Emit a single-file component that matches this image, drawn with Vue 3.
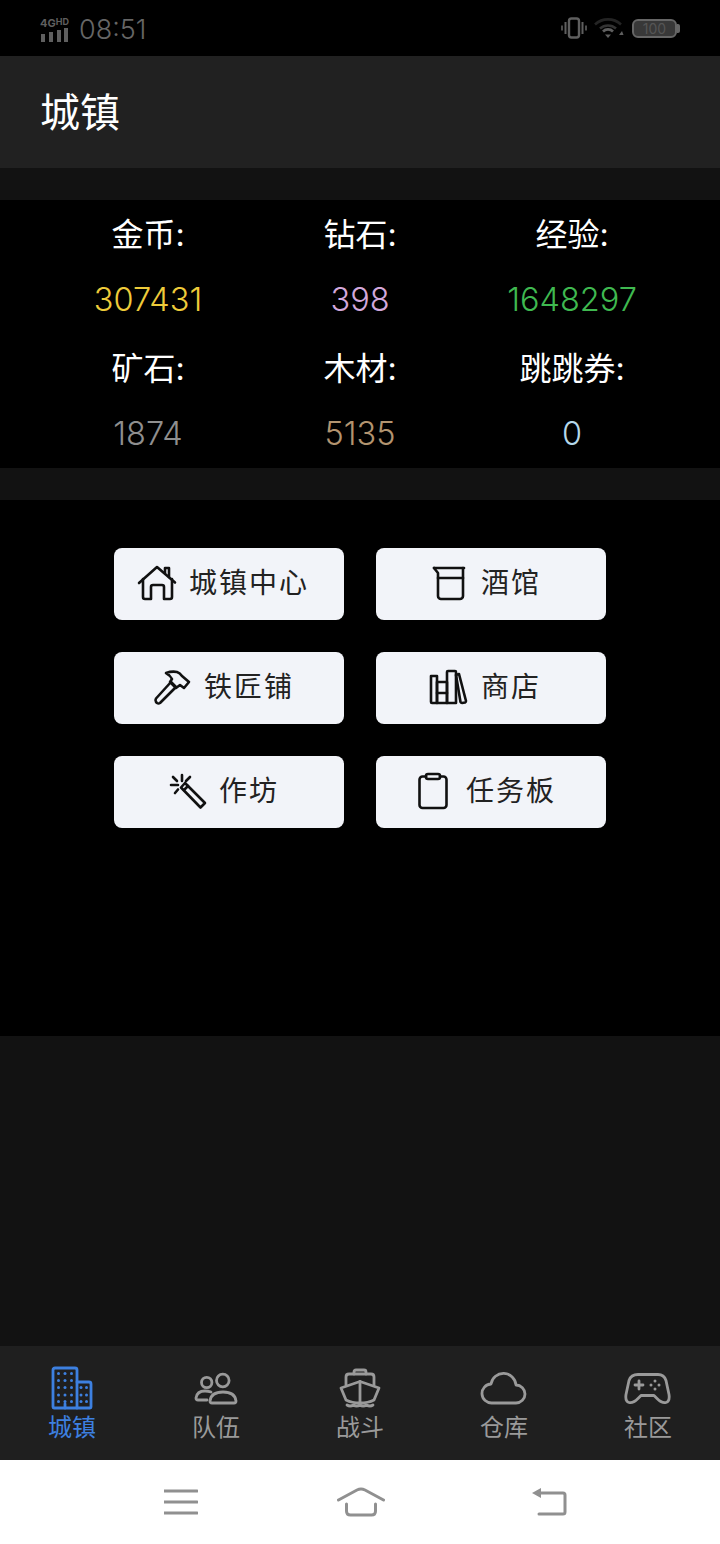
<template>
  <div class="page">
    <!-- status bar -->
    <div class="status">
      <div class="status-left">
        <div class="signal">
          <span class="net">4G<small>HD</small></span>
          <svg width="30" height="14" viewBox="0 0 30 14" fill="none" stroke="#5f5f5f" stroke-width="4">
            <path d="M3 6v8M11 4v10M19 2v12M26 0v14" />
          </svg>
        </div>
        <span class="clock">08:51</span>
      </div>
      <div class="status-right">
        <svg width="26" height="22" viewBox="0 0 26 22" fill="none" stroke="#5f5f5f">
          <rect x="8" y="1.500" width="10" height="19" rx="2.500" stroke-width="2.400" />
          <path d="M4.500 5v12M21.500 5v12" stroke-width="2" />
          <path d="M1 8.500v5M25 8.500v5" stroke-width="1.600" />
        </svg>
        <svg width="32" height="22" viewBox="0 0 32 22" fill="none" stroke-width="2.600">
          <path d="M2 7.500a19 19 0 0 1 26 0" stroke="#242424" />
          <path d="M7 11.500a12 12 0 0 1 16 0" stroke="#333" />
          <path d="M10 14.500a7 7 0 0 1 10 0" stroke="#5f5f5f" />
          <path d="M12 17.500h6l-3 3.500z" fill="#5f5f5f" />
          <path d="M26 18l3-4 1.500 4z" fill="#5f5f5f" />
        </svg>
        <div class="battery">
          <div class="battery-body"><span>100</span></div>
          <div class="battery-cap"></div>
        </div>
      </div>
    </div>

    <header class="topbar"><span>城镇</span></header>
    <div class="spacer"></div>

    <section class="stats">
      <div v-for="s in stats" :key="s.label" class="stat">
        <div class="stat-label">{{ s.label }}</div>
        <div class="stat-value" :style="{ color: s.color }">{{ s.value }}</div>
      </div>
    </section>
    <div class="spacer"></div>

    <section class="actions">
      <button v-for="a in actions" :key="a.label" class="action">
        <svg width="40" height="40" viewBox="0 0 40 40" fill="none" stroke="#111" stroke-width="2.600" stroke-linejoin="round" stroke-linecap="round">
          <path v-for="(d, i) in a.paths" :key="i" :d="d" />
        </svg>
        <span>{{ a.label }}</span>
      </button>
    </section>

    <div class="fill"></div>

    <nav class="tabbar">
      <div v-for="t in tabs" :key="t.label" class="tab" :class="{ active: t.active }">
        <svg width="48" height="44" viewBox="0 0 48 44" fill="none" stroke="currentColor" stroke-width="2.800" stroke-linejoin="round" stroke-linecap="round">
          <path v-for="(d, i) in t.paths" :key="i" :d="d" />
          <circle v-for="(c, i) in t.dots" :key="'d' + i" :cx="c[0]" :cy="c[1]" r="1.500" fill="currentColor" stroke="none" />
        </svg>
        <span>{{ t.label }}</span>
      </div>
    </nav>

    <!-- android nav keys -->
    <div class="syskeys">
      <svg width="34" height="28" viewBox="0 0 34 28" fill="none" stroke="#909090" stroke-width="3">
        <path d="M0 3h33M0 14h33M0 25h33" stroke-linecap="round" />
      </svg>
      <svg width="48" height="30" viewBox="0 0 48 30" fill="none" stroke="#909090" stroke-width="3" stroke-linecap="round">
        <path d="M1.500 13 20 3q4-2 8 0l18.500 10" />
        <path d="M9.500 17v7q0 4 4 4h21q4 0 4-4v-7" />
      </svg>
      <svg class="back" width="35" height="28" viewBox="0 0 35 28" fill="none" stroke="#909090" stroke-width="3" stroke-linecap="round">
        <path d="M8 5h23q2 0 2 2v17q0 2-2 2H7" />
        <path d="M9 0v10L0 5z" fill="#909090" stroke="none" />
      </svg>
    </div>
  </div>
</template>

<script setup>
const stats = [
  { label: '金币:', value: '307431', color: '#eecb3a' },
  { label: '钻石:', value: '398', color: '#d3a8dc' },
  { label: '经验:', value: '1648297', color: '#3fb950' },
  { label: '矿石:', value: '1874', color: '#8f8f8f' },
  { label: '木材:', value: '5135', color: '#b3946f' },
  { label: '跳跳券:', value: '0', color: '#b5d8ea' },
]

const actions = [
  {
    label: '城镇中心',
    paths: [
      'M2 19 20 3l18 15.500',
      'M6 15v18a2 2 0 0 0 2 2h6V23a2 2 0 0 1 2-2h9a2 2 0 0 1 2 2v12h6a2 2 0 0 0 2-2V15',
      'M28 9V4h4v9',
    ],
  },
  {
    label: '酒馆',
    paths: ['M5 4h30', 'M34 4v28a3 3 0 0 1-3 3H12a3 3 0 0 1-3-3V9L5 4', 'M9 14h25'],
  },
  {
    label: '铁匠铺',
    paths: [
      'M4 30.500 19 14l5 5L8 35q-1.500 1-3 0l-1-1q-1-2 0-3.500z',
      'M14 5q6-2 11-1 3 1 5 4l7 6-5 6-4-3-4 3-6-6 2-3q-2-4-6-6z',
    ],
  },
  {
    label: '商店',
    paths: [
      'M2 8h6v27H3a1 1 0 0 1-1-1z',
      'M8 14h10v21H8z',
      'M8 25h10',
      'M18 4a1 1 0 0 1 1-1h7a1 1 0 0 1 1 1v31h-9z',
      'M27 7l3-1 7 27q0 1-1 1.500l-3 .5q-1 0-1.500-1z',
    ],
  },
  {
    label: '作坊',
    paths: [
      'M18 11l20 20-4.500 4.500-19.500-20z',
      'M17 18l4-4',
      'M15 3v6M4 13h7M6 5l4 4M23 5l-4 4M8 21l3-3.500',
    ],
  },
  {
    label: '任务板',
    paths: [
      'M12 4.500H8.500a3 3 0 0 0-3 3V33a3 3 0 0 0 3 3h21a3 3 0 0 0 3-3V7.500a3 3 0 0 0-3-3H26',
      'M14 2h10a2 2 0 0 1 2 2v1a2 2 0 0 1-2 2H14a2 2 0 0 1-2-2V4a2 2 0 0 1 2-2z',
    ],
  },
]

// windows of the town icon
const buildingDots = []
for (const y of [7.500, 14.500, 21.500, 29, 35.500]) {
  for (const x of [10.500, 17, 23.500]) buildingDots.push([x, y])
}
for (const y of [21.500, 29, 35.500]) {
  for (const x of [33, 38.500]) buildingDots.push([x, y])
}

const tabs = [
  {
    label: '城镇',
    active: true,
    paths: [
      'M5 4a2 2 0 0 1 2-2h20a2 2 0 0 1 2 2v38H6a1 1 0 0 1-1-1V4z',
      'M29 16h12a2 2 0 0 1 2 2v23a1 1 0 0 1-1 1H29',
      'M17 42v-4',
    ],
    dots: buildingDots,
  },
  {
    label: '队伍',
    paths: [
      'M9.500 16.500a5.200 5.200 0 1 0 10.400 0a5.200 5.200 0 1 0-10.400 0z',
      'M24.500 14.500a6.300 6.300 0 1 0 12.600 0a6.300 6.300 0 1 0-12.600 0z',
      'M19 26q-3-1-6-1-8 0-9 7 0 2 2 2h9',
      'M18 35q1-9 13-9t13 9q0 2-2 2H20q-2 0-2-2z',
    ],
  },
  {
    label: '战斗',
    paths: [
      'M18 8V6q0-2 2-2h8q2 0 2 2v2',
      'M10 19v-8q0-3 3-3h22q3 0 3 3v8',
      'M24 15.500 5 22l5 12q6 3 14 3t14-3l5-12z',
      'M24 15.500V37',
      'M11 39q3 2 6.500 0 3 2 6.500 0 3 2 6.500 0 3.500 2 6.500 0',
    ],
  },
  {
    label: '仓库',
    paths: ['M12 37a9.500 9.500 0 0 1-1-19 12.600 12.600 0 0 1 25 1 9 9 0 0 1 0 18z'],
  },
  {
    label: '社区',
    paths: [
      'M14 8.500h20q6 0 8 6l3 14q1 7-3 8t-9-4l-3-3H17l-3 3q-5 5-9 4t-3-8l3-14q2-6 9-6z',
      'M11 19h8M15 15v8',
    ],
    dots: [[31, 15], [27, 19], [35, 19], [31, 23]],
  },
]
</script>

<style>
html,
body {
  margin: 0;
  background: #000;
}
</style>

<style scoped>
.page {
  width: 720px;
  height: 1544px;
  display: flex;
  flex-direction: column;
  background: #121212;
  font-family: 'Inter', 'Noto Sans CJK SC', sans-serif;
  color: #fff;
  overflow: hidden;
}

/* status bar */
.status {
  height: 56px;
  flex: none;
  background: #000;
  display: flex;
  justify-content: space-between;
  align-items: center;
  padding: 0 40px;
  box-sizing: border-box;
}
.status-left,
.status-right {
  display: flex;
  align-items: center;
}
.status-left {
  padding-top: 2px;
}
.status-right {
  gap: 6px;
}
.signal {
  display: flex;
  flex-direction: column;
  width: 31px;
  margin-right: 8px;
}
.net {
  font-size: 11px;
  line-height: 10px;
  font-weight: 700;
  color: #5f5f5f;
  white-space: nowrap;
}
.net small {
  font-size: 9px;
  vertical-align: 2px;
}
.clock {
  font-size: 27px;
  font-weight: 300;
  color: #666;
}
.battery {
  display: flex;
  align-items: center;
  margin-left: 1px;
}
.battery-body {
  width: 45px;
  height: 19px;
  box-sizing: border-box;
  border: 2px solid #666;
  border-radius: 6px;
  display: flex;
  align-items: center;
  justify-content: center;
  background: #383838;
}
.battery-body span {
  font-size: 14px;
  color: #555;
}
.battery-cap {
  width: 3px;
  height: 9px;
  background: #666;
  border-radius: 0 2px 2px 0;
}

.topbar {
  height: 112px;
  flex: none;
  background: #212121;
  display: flex;
  align-items: center;
  padding-left: 40px;
  font-size: 40px;
}
.topbar span {
  padding-bottom: 4px;
}

.spacer {
  height: 32px;
  flex: none;
}

/* resources */
.stats {
  height: 268px;
  flex: none;
  background: #000;
  box-sizing: border-box;
  padding: 3px 42px;
  display: grid;
  grid-template-columns: repeat(3, 212px);
  row-gap: 6px;
}
.stat {
  text-align: center;
}
.stat-label,
.stat-value {
  height: 64px;
  line-height: 64px;
  font-size: 32px;
}
.stat-value {
  font-size: 32.500px;
  line-height: 65px;
  font-weight: 300;
}

/* buttons */
.actions {
  height: 536px;
  flex: none;
  background: #000;
  box-sizing: border-box;
  padding: 48px 114px 0;
  display: grid;
  grid-template-columns: 230px 230px;
  grid-auto-rows: 72px;
  gap: 32px;
}
.action {
  border: none;
  border-radius: 8px;
  background: #f2f4f9;
  color: #222;
  display: flex;
  align-items: center;
  justify-content: center;
  gap: 12px;
  padding: 0 12px 0 0;
  font-family: inherit;
  font-size: 28px;
  letter-spacing: 2px;
}
.action span {
  padding-bottom: 6px;
}

.fill {
  flex: 1;
}

/* bottom tabs */
.tabbar {
  height: 114px;
  flex: none;
  background: #1f1f1f;
  display: grid;
  grid-template-columns: repeat(5, 144px);
  box-sizing: border-box;
  padding-top: 20px;
}
.tab {
  display: flex;
  flex-direction: column;
  align-items: center;
  color: #9a9a9a;
  font-size: 24px;
  line-height: 36px;
}
.tab.active {
  color: #3d80e0;
}

.syskeys {
  height: 84px;
  flex: none;
  background: #fff;
  display: flex;
  align-items: center;
  gap: 139px;
  padding-left: 164px;
}
.syskeys .back {
  margin-left: 8px;
}
</style>
